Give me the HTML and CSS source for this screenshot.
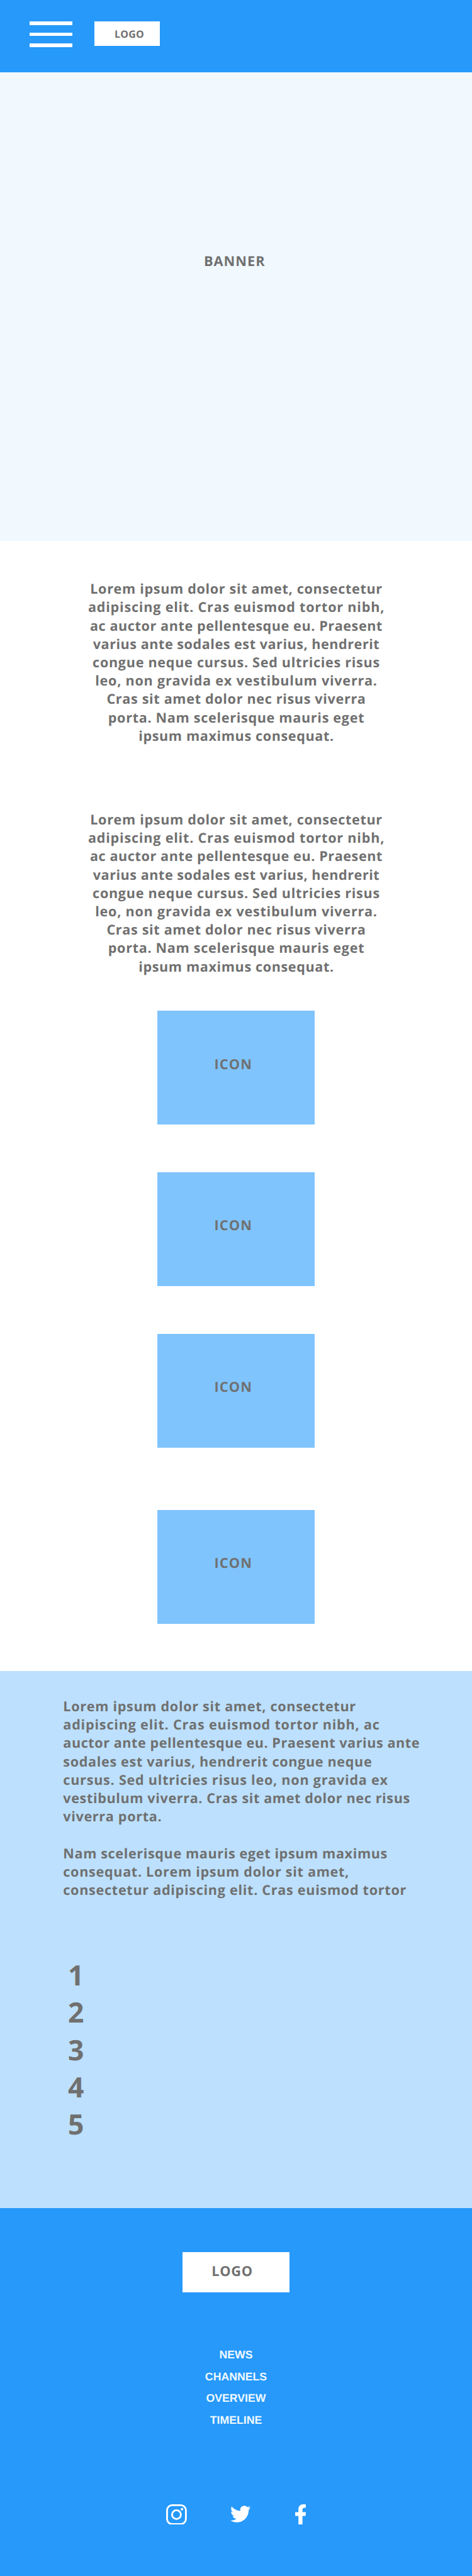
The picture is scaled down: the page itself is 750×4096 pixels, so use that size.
FILE: index.html
```html
<!DOCTYPE html>
<html lang="en">
<head>
<meta charset="utf-8">
<title>Mobile wireframe</title>
<link rel="stylesheet" href="styles.css">
</head>
<body>
<header class="header">
  <div class="menu"><span class="bar"></span><span class="bar"></span><span class="bar"></span></div>
  <div class="header-logo">LOGO</div>
</header>
<section class="banner">BANNER</section>
<main class="content">
  <p class="intro">
    <span class="line ls-66">Lorem ipsum dolor sit amet, consectetur</span>
    <span class="line ls-80">adipiscing elit. Cras euismod tortor nibh,</span>
    <span class="line ls-58">ac auctor ante pellentesque eu. Praesent</span>
    <span class="line ls-53">varius ante sodales est varius, hendrerit</span>
    <span class="line ls-71">congue neque cursus. Sed ultricies risus</span>
    <span class="line ls-76">leo, non gravida ex vestibulum viverra.</span>
    <span class="line ls-66">Cras sit amet dolor nec risus viverra</span>
    <span class="line ls-69">porta. Nam scelerisque mauris eget</span>
    <span class="line ls-62">ipsum maximus consequat.</span>
  </p>
  <p class="intro">
    <span class="line ls-66">Lorem ipsum dolor sit amet, consectetur</span>
    <span class="line ls-80">adipiscing elit. Cras euismod tortor nibh,</span>
    <span class="line ls-58">ac auctor ante pellentesque eu. Praesent</span>
    <span class="line ls-53">varius ante sodales est varius, hendrerit</span>
    <span class="line ls-71">congue neque cursus. Sed ultricies risus</span>
    <span class="line ls-76">leo, non gravida ex vestibulum viverra.</span>
    <span class="line ls-66">Cras sit amet dolor nec risus viverra</span>
    <span class="line ls-69">porta. Nam scelerisque mauris eget</span>
    <span class="line ls-62">ipsum maximus consequat.</span>
  </p>
  <div class="tiles">
    <div class="tile">ICON</div>
    <div class="tile">ICON</div>
    <div class="tile">ICON</div>
    <div class="tile tile-last">ICON</div>
  </div>
</main>
<section class="details">
  <p class="copy">
    <span class="line ls-69">Lorem ipsum dolor sit amet, consectetur</span>
    <span class="line ls-80">adipiscing elit. Cras euismod tortor nibh, ac</span>
    <span class="line ls-56">auctor ante pellentesque eu. Praesent varius ante</span>
    <span class="line ls-66">sodales est varius, hendrerit congue neque</span>
    <span class="line ls-76">cursus. Sed ultricies risus leo, non gravida ex</span>
    <span class="line ls-62">vestibulum viverra. Cras sit amet dolor nec risus</span>
    <span class="line ls-66">viverra porta.</span>
  </p>
  <p class="copy">
    <span class="line ls-62">Nam scelerisque mauris eget ipsum maximus</span>
    <span class="line ls-69">consequat. Lorem ipsum dolor sit amet,</span>
    <span class="line ls-71">consectetur adipiscing elit. Cras euismod tortor</span>
  </p>
  <div class="numbers"><div>1</div><div>2</div><div>3</div><div>4</div><div>5</div></div>
</section>
<footer class="footer">
  <div class="footer-logo">LOGO</div>
  <nav class="links"><a>NEWS</a><a>CHANNELS</a><a>OVERVIEW</a><a>TIMELINE</a></nav>
  <div class="social">
    <svg class="instagram" viewBox="0 0 37 37"><rect x="1.6" y="1.6" width="33.8" height="33.8" rx="9.2" fill="none" stroke="#fff" stroke-width="3.2"/><circle cx="18.5" cy="18.5" r="7.9" fill="none" stroke="#fff" stroke-width="3.2"/><circle cx="28.4" cy="8.7" r="2.2" fill="#fff"/></svg>
    <svg class="twitter" viewBox="0 2.25 24 19.5"><path fill="#fff" d="M23.953 4.57a10 10 0 01-2.825.775 4.958 4.958 0 002.163-2.723c-.951.555-2.005.959-3.127 1.184a4.92 4.92 0 00-8.384 4.482C7.69 8.095 4.067 6.13 1.64 3.162a4.822 4.822 0 00-.666 2.475c0 1.71.87 3.213 2.188 4.096a4.904 4.904 0 01-2.228-.616v.06a4.923 4.923 0 003.946 4.827 4.996 4.996 0 01-2.212.085 4.936 4.936 0 004.604 3.417 9.867 9.867 0 01-6.102 2.105c-.39 0-.779-.023-1.17-.067a13.995 13.995 0 007.557 2.209c9.053 0 13.998-7.496 13.998-13.985 0-.21 0-.42-.015-.63A9.935 9.935 0 0024 4.59z"/></svg>
    <svg class="facebook" viewBox="22.9 0 270.5 512"><path fill="#fff" d="M279.14 288l14.22-92.66h-88.91v-60.13c0-25.35 12.42-50.06 52.24-50.06h40.42V6.26S260.43 0 225.36 0c-73.22 0-121.08 44.38-121.08 124.72v70.62H22.89V288h81.39v224h100.17V288z"/></svg>
  </div>
</footer>
</body>
</html>
```
FILE: styles.css
```css
* { box-sizing: border-box; }
body {
  margin: 0;
  width: 750px;
  height: 4096px;
  background: #fff;
  color: #707070;
  font: bold 21.8px/29.2px "Open Sans", "Noto Sans", sans-serif;
  text-rendering: geometricPrecision;
}
p { margin: 0; }

.header {
  display: flex;
  align-items: flex-start;
  height: 115.2px;
  padding: 34.3px 0 0 47.2px;
  background: #2699fb;
}
.menu {
  display: flex;
  flex-direction: column;
  gap: 11.5px;
  width: 67.7px;
}
.bar { height: 5.8px; background: #fff; }
.header-logo {
  width: 104.5px;
  height: 39px;
  margin-left: 34.7px;
  padding: 6px 0 0 32.4px;
  background: #fff;
  font-size: 16px;
  letter-spacing: 0.25px;
}

.banner {
  height: 744.9px;
  padding: 285.9px 0 0 323.9px;
  background: #f1f9ff;
  letter-spacing: 1px;
}

.content { height: 1797.3px; padding-top: 62.2px; }
.line { display: block; white-space: nowrap; }
.intro { padding-left: 1px; font-size: 21.6px; text-align: center; }
.intro + .intro { margin-top: 103.9px; }
.tiles {
  display: flex;
  flex-direction: column;
  align-items: center;
  gap: 75.4px;
  margin-top: 55px;
}
.tile {
  width: 250.5px;
  height: 181.6px;
  padding: 70.7px 0 0 90.7px;
  background: #7fc4fd;
  letter-spacing: 1.1px;
}
.tile-last { margin-top: 22.9px; }

.details {
  height: 853.9px;
  padding: 41.7px 0 0 100.3px;
  background: #bce0fd;
}
.copy { font-size: 21.6px; }
.copy + .copy { margin-top: 29.2px; }
.numbers {
  margin-top: 91.6px;
  padding-left: 7.8px;
  font-size: 44.4px;
  line-height: 59.37px;
}

.footer {
  display: flex;
  flex-direction: column;
  align-items: center;
  height: 584.7px;
  padding-top: 69.9px;
  background: #2699fb;
}
.footer-logo {
  width: 170.1px;
  height: 63.8px;
  padding: 16px 0 0 46.2px;
  background: #fff;
  letter-spacing: 0.75px;
}
.links {
  display: flex;
  flex-direction: column;
  align-items: center;
  margin-top: 82.1px;
  color: #f1f9ff;
  font: bold 17.7px/34.55px "Liberation Sans", Arial, sans-serif;
}
.social {
  display: flex;
  align-items: flex-start;
  width: 222.4px;
  margin-top: 116.3px;
}
.instagram { width: 32.8px; height: 32.8px; }
.twitter { width: 32.4px; height: 27px; margin: 2px 0 0 69.8px; }
.facebook { width: 17.3px; height: 32.8px; margin-left: 70px; }

/* tracking steps for the copy lines */
.ls-53 { letter-spacing: 0.53px; }
.ls-56 { letter-spacing: 0.56px; }
.ls-58 { letter-spacing: 0.58px; }
.ls-62 { letter-spacing: 0.625px; }
.ls-66 { letter-spacing: 0.665px; }
.ls-69 { letter-spacing: 0.69px; }
.ls-71 { letter-spacing: 0.71px; }
.ls-76 { letter-spacing: 0.76px; }
.ls-80 { letter-spacing: 0.8px; }
```
